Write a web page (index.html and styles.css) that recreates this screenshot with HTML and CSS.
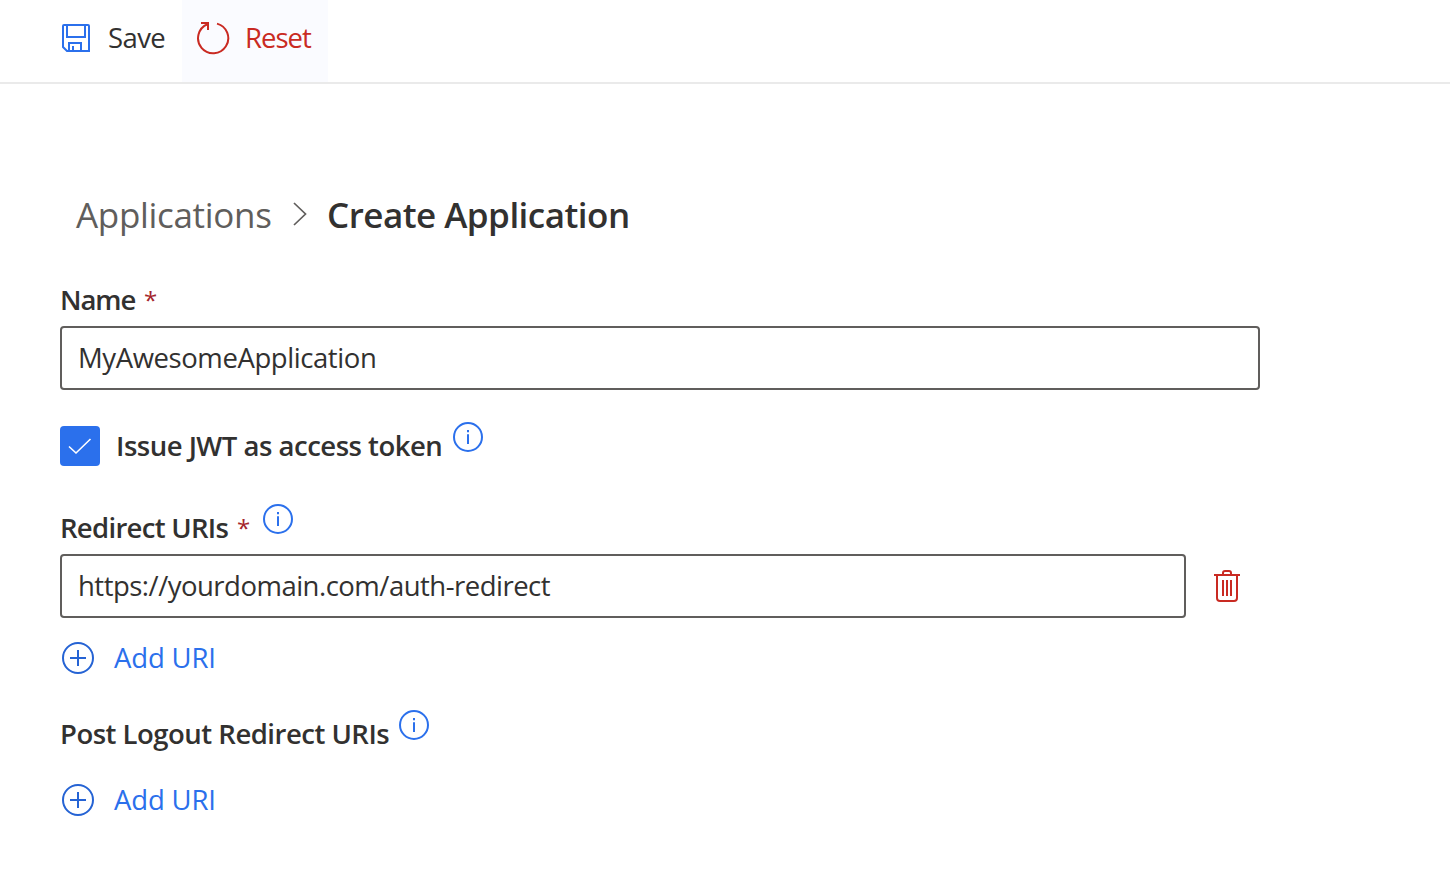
FILE: index.html
```html
<!DOCTYPE html>
<html lang="en">
<head>
<meta charset="utf-8">
<title>Create Application</title>
<link rel="stylesheet" href="styles.css">
</head>
<body>
<header class="toolbar">
  <button class="command save">
    <svg class="save-icon" width="28" height="28" viewBox="0 0 28 28"><path d="M2 1H26Q27 1 27 2V27H5L1 23V2Q1 1 2 1ZM5 1V13H23V1M7 27V19H19V27M11 27V22"/></svg>
    <span class="save-text">Save</span>
  </button>
  <button class="command reset">
    <svg class="reset-icon" width="34" height="34" viewBox="0 0 34 34"><path d="M21 2.6A15.1 15.1 0 1 1 11.5 3.2M5 2H12V9"/></svg>
    <span class="reset-text">Reset</span>
  </button>
</header>
<main class="page">
  <nav class="breadcrumb">
    <a class="crumb">Applications</a>
    <svg class="chevron" width="14" height="24" viewBox="0 0 14 24"><path d="M1 1L12.5 12L1 23"/></svg>
    <span class="crumb-current">Create Application</span>
  </nav>
  <form class="form">
    <div class="label-row name-row"><label class="label name-label">Name</label><span class="required">*</span></div>
    <input class="input name-input" type="text" value="MyAwesomeApplication">
    <div class="check-row">
      <span class="checkbox"><svg width="24" height="18" viewBox="0 0 24 18"><path d="M1 9.5L8 16L22.5 2"/></svg></span>
      <label class="label jwt-label">Issue JWT as access token</label>
      <svg class="info" width="30" height="30" viewBox="0 0 30 30"><circle cx="15" cy="15" r="14"/><path d="M15 12.2V22M15 8V10.2"/></svg>
    </div>
    <div class="label-row redirect-row"><label class="label redirect-label">Redirect URIs</label><span class="required">*</span>
      <svg class="info" width="30" height="30" viewBox="0 0 30 30"><circle cx="15" cy="15" r="14"/><path d="M15 12.2V22M15 8V10.2"/></svg>
    </div>
    <div class="uri-row">
      <input class="input uri-input" type="text" value="https://yourdomain.com/auth-redirect">
      <svg class="trash" width="26" height="32" viewBox="0 0 26 32"><path d="M0 5H26M9 5V3Q9 1 11 1H15Q17 1 17 3V5M3 5V28Q3 31 6 31H20Q23 31 23 28V5M9 10V26M13 10V26M17 10V26"/></svg>
    </div>
    <button class="add" type="button">
      <svg width="32" height="32" viewBox="0 0 32 32"><path d="M16 8V24M8 16H24"/><circle cx="16" cy="16" r="15"/></svg>
      <span class="add-text">Add URI</span>
    </button>
    <div class="label-row logout-row"><label class="label logout-label">Post Logout Redirect URIs</label>
      <svg class="info" width="30" height="30" viewBox="0 0 30 30"><circle cx="15" cy="15" r="14"/><path d="M15 12.2V22M15 8V10.2"/></svg>
    </div>
    <button class="add add-logout" type="button">
      <svg width="32" height="32" viewBox="0 0 32 32"><path d="M16 8V24M8 16H24"/><circle cx="16" cy="16" r="15"/></svg>
      <span class="add-text">Add URI</span>
    </button>
  </form>
</main>
</body>
</html>
```
FILE: styles.css
```css
* { box-sizing: border-box; }
body {
  margin: 0;
  background: #fff;
  color: #323130;
  font-family: "Open Sans", "Noto Sans", sans-serif;
  font-size: 27.5px;
}
svg { display: block; flex: none; fill: none; stroke: #2b70ec; stroke-width: 2; }
button { border: 0; padding: 0; background: none; font: inherit; color: inherit; }
span, label, a { white-space: nowrap; }
.toolbar {
  display: flex;
  height: 84px;
  padding-left: 46px;
  border-bottom: 2px solid #eaeaea;
}
.command { display: flex; align-items: center; height: 82px; padding-bottom: 6px; }
.save { width: 136px; padding-left: 16px; gap: 18px; }
.save-text { padding-bottom: 2px; letter-spacing: -0.6px; }
.reset { width: 146px; padding-left: 14px; gap: 15px; background: #fafbff; color: #c92a22; }
.reset-text { padding-bottom: 2px; letter-spacing: -1px; }
.reset-icon { stroke: #c92a22; }
.page { padding: 104px 0 0 60px; }
.breadcrumb { display: flex; align-items: center; height: 52px; padding-left: 16px; font-size: 35px; }
.crumb { width: 217px; color: #605e5c; letter-spacing: -0.32px; }
.chevron { width: 14px; margin-right: 20px; stroke: #605e5c; stroke-width: 1.7; }
.crumb-current { font-weight: 600; letter-spacing: -0.52px; }
.form { width: 1200px; margin: 0; }
.label-row { display: flex; align-items: center; height: 40px; }
.label { font-weight: 600; }
.required { margin-left: 8px; color: #a4262c; font-size: 24px; }
.name-row { margin-top: 39px; }
.name-label { width: 76px; letter-spacing: -1.1px; }
.input {
  display: block;
  height: 64px;
  padding: 0 16px 2px;
  border: 2px solid #605e5c;
  border-radius: 4px;
  outline: 0;
  background: #fff;
  color: #323130;
  font: inherit;
}
.name-input { width: 1200px; margin-top: 7px; letter-spacing: -0.42px; }
.check-row { display: flex; align-items: center; height: 40px; margin-top: 36px; }
.checkbox {
  display: flex;
  align-items: center;
  justify-content: center;
  width: 40px;
  height: 40px;
  margin-right: 16px;
  border-radius: 4px;
  background: #2b70ec;
}
.checkbox svg { stroke: #fff; stroke-width: 1.6; }
.jwt-label { width: 337px; padding-bottom: 2px; letter-spacing: -0.5px; }
.info { margin-bottom: 18px; }
.label-row .info { margin-bottom: 16px; }
.redirect-row { margin-top: 41px; }
.redirect-label { width: 169px; letter-spacing: -0.7px; }
.redirect-row .required { width: 26px; }
.uri-row { display: flex; align-items: center; margin-top: 7px; }
.uri-input { width: 1126px; letter-spacing: -0.51px; }
.trash { margin-left: 28px; stroke: #c92a22; }
.add { display: flex; align-items: center; height: 40px; margin: 20px 0 0 2px; gap: 20px; color: #2b70ec; }
.add svg { stroke: #2563d4; }
.add-text { padding-bottom: 2px; letter-spacing: -0.15px; }
.logout-row { margin-top: 35px; }
.logout-label { width: 339px; letter-spacing: -0.5px; }
.add-logout { margin-top: 27px; }
```
